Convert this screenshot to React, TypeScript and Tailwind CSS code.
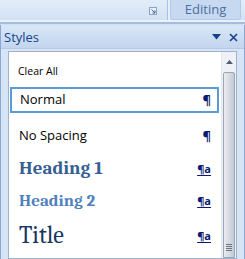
const ui = { fontFamily: '"Open Sans", "DejaVu Sans", sans-serif' }
const serif = { fontFamily: 'Cambria, "DejaVu Serif", "Liberation Serif", serif' }

function Pilcrow({ a }: { a?: boolean }) {
  if (a) {
    return (
      <span className="text-[11px] font-bold leading-none text-[#0a1a6e] underline decoration-1 underline-offset-2" style={ui}>
        ¶a
      </span>
    )
  }
  return (
    <span className="text-[13px] font-bold leading-none text-[#0a1a6e]" style={ui}>
      ¶
    </span>
  )
}

function Launcher() {
  return (
    <svg width="8" height="8" viewBox="0 0 8 8">
      <rect x="0.5" y="0.5" width="7" height="7" fill="#e8eff8" stroke="#8aa5c8" />
      <path d="M2.5 2.5 L6 6 M6 3.5 V6 H3.5" stroke="#4a6690" fill="none" />
    </svg>
  )
}

export default function App() {
  return (
    <div className="w-[245px] h-[259px] overflow-hidden bg-[#cfdff3] flex flex-col" style={ui}>
      {/* ribbon remnant */}
      <div className="h-[20px] flex bg-gradient-to-b from-[#e3edf9] to-[#d2e1f4]">
        <div className="flex-1 flex items-end justify-end pr-[10px] pb-[5px]">
          <Launcher />
        </div>
        <div className="w-[3px] border-l border-[#a9c1e0] bg-[#e6eef9]" />
        <div className="w-[71px] mr-[4px] bg-[#c6d9f0] border-x border-b border-[#b3c9e6] rounded-b-[3px] flex items-center justify-center text-[13px] text-[#4f6f9f] leading-none">
          Editing
        </div>
      </div>
      <div className="h-[2px] bg-[#e9f1fb]" />
      <div className="h-[2px] bg-[#a4bddf]" />

      {/* styles pane */}
      <div className="flex-1 flex flex-col border-l border-r border-[#8aa8d2] mt-[1px] bg-[#d6e4f5]">
        <div className="h-[23px] mt-[1px] flex items-center px-[3px] bg-gradient-to-b from-[#d8e6f7] to-[#c3d6ee] border-b border-[#b5cae6]">
          <span className="text-[13px] text-[#15428b] leading-none">Styles</span>
          <div className="ml-auto flex items-center gap-[8px] pr-[3px]">
            <svg width="9" height="6" viewBox="0 0 9 6">
              <path d="M0 0 H9 L4.5 5.5 Z" fill="#15428b" />
            </svg>
            <svg width="9" height="9" viewBox="0 0 9 9">
              <path d="M1 1 L8 8 M8 1 L1 8" stroke="#15428b" strokeWidth="1.6" />
            </svg>
          </div>
        </div>

        <div className="flex-1 mx-[7px] mt-[2px] border border-[#9eb2cc] bg-white flex">
          <div className="flex-1 flex flex-col pt-[4px] pl-[1px] pr-[2px]">
            <div className="h-[31px] flex items-center pl-[8px] text-[10.5px] text-black">Clear All</div>
            <div className="h-[26px] flex items-center justify-between pl-[8px] pr-[6px] border-2 border-[#5b9bd5]">
              <span className="text-[13px] text-black">Normal</span>
              <Pilcrow />
            </div>
            <div className="h-[34px] mt-[6px] flex items-center justify-between pl-[9px] pr-[8px]">
              <span className="text-[13px] text-black">No Spacing</span>
              <Pilcrow />
            </div>
            <div className="h-[31px] flex items-center justify-between pl-[9px] pr-[8px]">
              <span className="text-[19px] font-bold text-[#365f91] leading-none" style={serif}>Heading 1</span>
              <Pilcrow a />
            </div>
            <div className="h-[33px] flex items-center justify-between pl-[9px] pr-[8px]">
              <span className="text-[17px] font-bold text-[#4f81bd] leading-none" style={serif}>Heading 2</span>
              <Pilcrow a />
            </div>
            <div className="h-[36px] flex items-center justify-between pl-[9px] pr-[8px]">
              <span className="text-[24px] text-[#17365d] leading-none" style={serif}>Title</span>
              <Pilcrow a />
            </div>
          </div>

          {/* scrollbar */}
          <div className="w-[15px] flex flex-col bg-[#eef1f5] border-l border-[#e3e7ed]">
            <div className="h-[19px] flex items-center justify-center">
              <svg width="7" height="4" viewBox="0 0 7 4">
                <path d="M0 4 L3.5 0 L7 4 Z" fill="#4d5d73" />
              </svg>
            </div>
            <div className="flex-1 mx-[1px] mt-[1px] rounded-t-[2px] border border-[#9aa6b5] bg-gradient-to-r from-[#e9ecf0] via-[#d6dbe2] to-[#c4cad3] flex flex-col items-center justify-end pb-[6px]">
              <div className="flex flex-col gap-[1px]">
                <div className="w-[6px] h-px bg-[#6b7686]" />
                <div className="w-[6px] h-px bg-[#6b7686]" />
                <div className="w-[6px] h-px bg-[#6b7686]" />
                <div className="w-[6px] h-px bg-[#6b7686]" />
              </div>
            </div>
          </div>
        </div>
      </div>
    </div>
  )
}
